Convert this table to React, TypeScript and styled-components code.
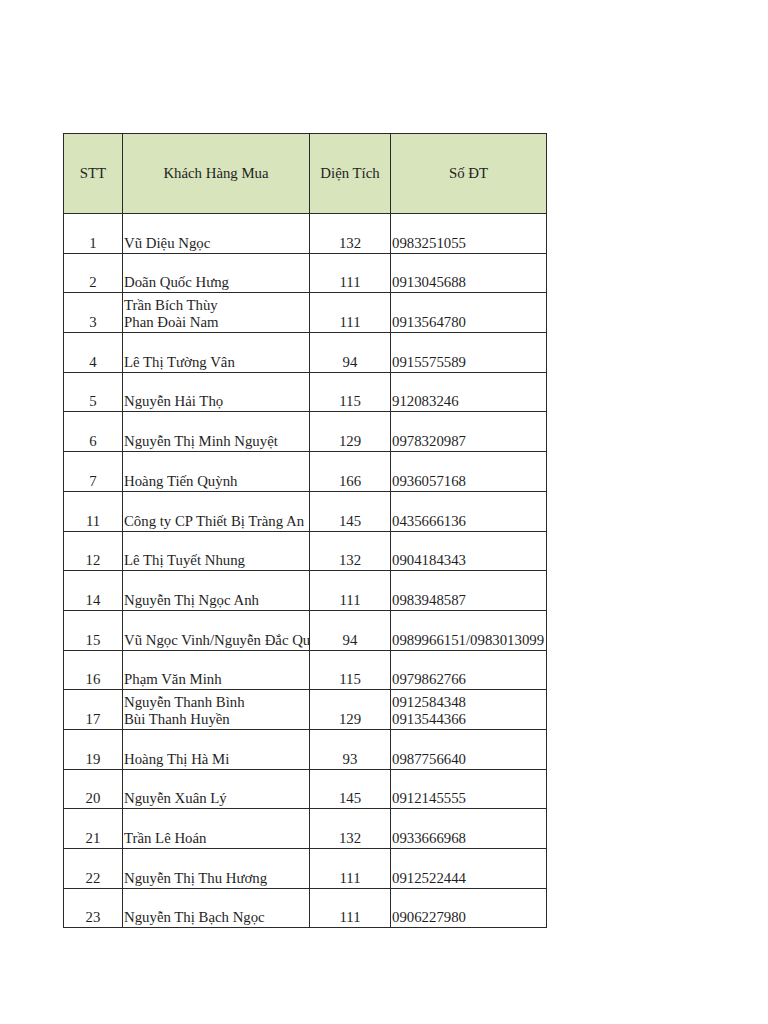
import React from "react";
import styled, { createGlobalStyle } from "styled-components";

const Global = createGlobalStyle`
  html, body { margin: 0; padding: 0; background: #ffffff; }
  body { font-family: "Liberation Serif", "Times New Roman", serif; color: #1f1f1f; }
`;

const Page = styled.div`
  width: 768px;
  height: 1024px;
  padding: 133px 0 0 63px;
  box-sizing: border-box;
`;

const Table = styled.table`
  border-collapse: collapse;
  table-layout: fixed;
  width: 483px;
  border: 1px solid #222;
  font-size: 14.8px;
`;

const Col = styled.col<{ $w: number }>`
  width: ${(p) => p.$w}px;
`;

const HeadCell = styled.th`
  background: #d8e4bc;
  height: 79px;
  padding: 0;
  border: 1px solid #2a2a2a;
  font-weight: normal;
  text-align: center;
  vertical-align: middle;
  line-height: 17px;
`;

const Row = styled.tr`
  height: 39.7px;
`;

const Cell = styled.td<{ $align?: "left" | "center" }>`
  border: 1px solid #2a2a2a;
  padding: 0 0 1px ${(p) => (p.$align === "center" ? "0" : "1px")};
  text-align: ${(p) => p.$align ?? "left"};
  vertical-align: bottom;
  line-height: 17px;
  white-space: nowrap;
  overflow: ${(p) => (p.$align === "center" ? "hidden" : "visible")};
`;

const NameCell = styled(Cell)`
  overflow: hidden;
`;

const Line = styled.div``;

type R = { stt: string; names: string[]; area: string; phones: string[] };

const rows: R[] = [
  { stt: "1", names: ["Vũ Diệu Ngọc"], area: "132", phones: ["0983251055"] },
  { stt: "2", names: ["Doãn Quốc Hưng"], area: "111", phones: ["0913045688"] },
  { stt: "3", names: ["Trần Bích Thùy", "Phan Đoài Nam"], area: "111", phones: ["0913564780"] },
  { stt: "4", names: ["Lê Thị Tường Vân"], area: "94", phones: ["0915575589"] },
  { stt: "5", names: ["Nguyễn Hải Thọ"], area: "115", phones: ["912083246"] },
  { stt: "6", names: ["Nguyễn Thị Minh Nguyệt"], area: "129", phones: ["0978320987"] },
  { stt: "7", names: ["Hoàng Tiến Quỳnh"], area: "166", phones: ["0936057168"] },
  { stt: "11", names: ["Công ty CP Thiết Bị Tràng An"], area: "145", phones: ["0435666136"] },
  { stt: "12", names: ["Lê Thị Tuyết Nhung"], area: "132", phones: ["0904184343"] },
  { stt: "14", names: ["Nguyễn Thị Ngọc Anh"], area: "111", phones: ["0983948587"] },
  { stt: "15", names: ["Vũ Ngọc Vinh/Nguyễn Đắc Quang"], area: "94", phones: ["0989966151/0983013099"] },
  { stt: "16", names: ["Phạm Văn Minh"], area: "115", phones: ["0979862766"] },
  { stt: "17", names: ["Nguyễn Thanh Bình", "Bùi Thanh Huyền"], area: "129", phones: ["0912584348", "0913544366"] },
  { stt: "19", names: ["Hoàng Thị Hà Mi"], area: "93", phones: ["0987756640"] },
  { stt: "20", names: ["Nguyễn Xuân Lý"], area: "145", phones: ["0912145555"] },
  { stt: "21", names: ["Trần Lê Hoán"], area: "132", phones: ["0933666968"] },
  { stt: "22", names: ["Nguyễn Thị Thu Hương"], area: "111", phones: ["0912522444"] },
  { stt: "23", names: ["Nguyễn Thị Bạch Ngọc"], area: "111", phones: ["0906227980"] },
];

export default function App() {
  return (
    <Page>
      <Global />
      <Table>
        <colgroup>
          <Col $w={59} />
          <Col $w={187} />
          <Col $w={81} />
          <Col $w={156} />
        </colgroup>
        <thead>
          <tr>
            <HeadCell>STT</HeadCell>
            <HeadCell>Khách Hàng Mua</HeadCell>
            <HeadCell>Diện Tích</HeadCell>
            <HeadCell>Số ĐT</HeadCell>
          </tr>
        </thead>
        <tbody>
          {rows.map((r) => (
            <Row key={r.stt}>
              <Cell $align="center">{r.stt}</Cell>
              <NameCell>
                {r.names.map((n) => (
                  <Line key={n}>{n}</Line>
                ))}
              </NameCell>
              <Cell $align="center">{r.area}</Cell>
              <Cell>
                {r.phones.map((p) => (
                  <Line key={p}>{p}</Line>
                ))}
              </Cell>
            </Row>
          ))}
        </tbody>
      </Table>
    </Page>
  );
}
